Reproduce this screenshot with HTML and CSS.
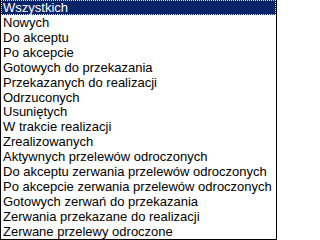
FILE: index.html
```html
<!DOCTYPE html>
<html>
<head>
<meta charset="utf-8">
<link rel="stylesheet" href="styles.css">
</head>
<body>
<div class="listbox">
  <div class="item selected">Wszystkich</div>
  <div class="item">Nowych</div>
  <div class="item">Do akceptu</div>
  <div class="item">Po akcepcie</div>
  <div class="item">Gotowych do przekazania</div>
  <div class="item">Przekazanych do realizacji</div>
  <div class="item">Odrzuconych</div>
  <div class="item">Usuniętych</div>
  <div class="item">W trakcie realizacji</div>
  <div class="item">Zrealizowanych</div>
  <div class="item">Aktywnych przelewów odroczonych</div>
  <div class="item">Do akceptu zerwania przelewów odroczonych</div>
  <div class="item">Po akcepcie zerwania przelewów odroczonych</div>
  <div class="item">Gotowych zerwań do przekazania</div>
  <div class="item">Zerwania przekazane do realizacji</div>
  <div class="item">Zerwane przelewy odroczone</div>
</div>
</body>
</html>
```
FILE: styles.css
```css
html, body {
  margin: 0;
  padding: 0;
  background: #fff;
}
.listbox {
  box-sizing: border-box;
  width: 277px;
  height: 240px;
  border: 1px solid #000;
  border-top: none;
  padding: 0;
  display: flex;
  flex-direction: column;
  font-family: "Liberation Sans", Arial, sans-serif;
  font-size: 13px;
  color: #000;
  overflow: hidden;
}
.item {
  height: 14.93px;
  line-height: 15px;
  padding-left: 2px;
  white-space: nowrap;
  flex: none;
}
.selected {
  background: #0a246a;
  color: #fff;
  outline: 1px dotted #f5db95;
  outline-offset: -1px;
}
```
